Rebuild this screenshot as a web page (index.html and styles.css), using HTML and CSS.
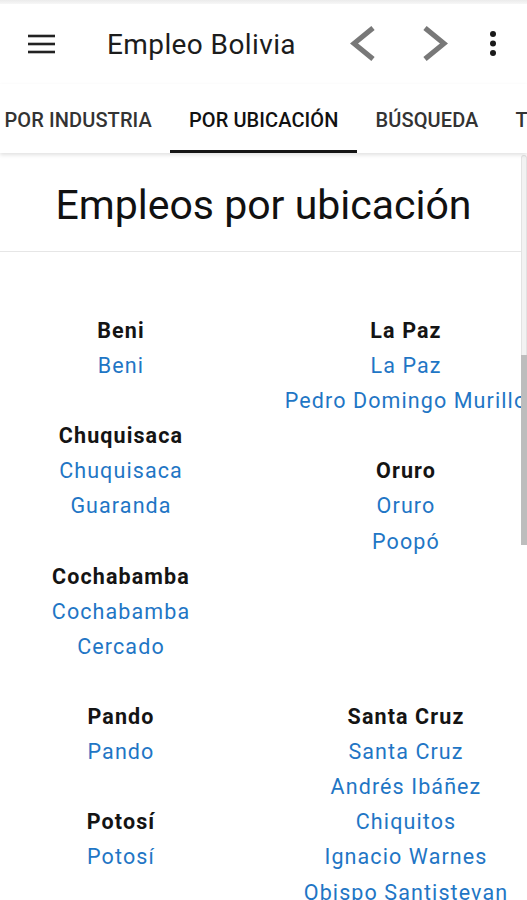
FILE: index.html
```html
<!DOCTYPE html>
<html lang="es">
<head>
<meta charset="utf-8">
<title>Empleo Bolivia</title>
<link rel="stylesheet" href="styles.css">
</head>
<body>
<div class="statusbar"></div>
<header class="toolbar">
  <button class="icon-btn menu-btn" aria-label="Menú">
    <svg width="27" height="22" viewBox="0 0 27 22"><rect x="0" y="1.7" width="27" height="2.6" fill="#222"/><rect x="0" y="9.7" width="27" height="2.6" fill="#222"/><rect x="0" y="17.7" width="27" height="2.6" fill="#222"/></svg>
  </button>
  <h1 class="title">Empleo Bolivia</h1>
  <div class="actions">
    <button class="icon-btn nav-btn" aria-label="Anterior">
      <svg width="26" height="36" viewBox="0 0 26 36"><polyline points="23,2 4,17.5 23,33" fill="none" stroke="#787878" stroke-width="5.2"/></svg>
    </button>
    <button class="icon-btn nav-btn" aria-label="Siguiente">
      <svg width="26" height="36" viewBox="0 0 26 36"><polyline points="3,2 22,17.5 3,33" fill="none" stroke="#787878" stroke-width="5.2"/></svg>
    </button>
    <button class="icon-btn more-btn" aria-label="Más">
      <svg width="8" height="28" viewBox="0 0 8 28"><circle cx="4" cy="4" r="3"/><circle cx="4" cy="13.5" r="3"/><circle cx="4" cy="23" r="3"/></svg>
    </button>
  </div>
</header>
<nav class="tabs">
  <div class="tab-strip">
    <div class="tab">Por industria</div>
    <div class="tab active">Por ubicación</div>
    <div class="tab">Búsqueda</div>
    <div class="tab">Todos</div>
  </div>
</nav>
<main class="content">
  <div class="page-head"><h2>Empleos por ubicación</h2></div>
  <section class="regions">
    <div class="region-grid">
      <div class="col">
        <div class="group"><div class="dept">Beni</div><a class="city">Beni</a></div>
        <div class="group"><div class="dept">Chuquisaca</div><a class="city">Chuquisaca</a><a class="city">Guaranda</a></div>
        <div class="group"><div class="dept">Cochabamba</div><a class="city">Cochabamba</a><a class="city">Cercado</a></div>
      </div>
      <div class="col">
        <div class="group"><div class="dept">La Paz</div><a class="city">La Paz</a><a class="city">Pedro Domingo Murillo</a></div>
        <div class="group"><div class="dept">Oruro</div><a class="city">Oruro</a><a class="city">Poopó</a></div>
      </div>
    </div>
    <div class="region-grid">
      <div class="col">
        <div class="group"><div class="dept">Pando</div><a class="city">Pando</a></div>
        <div class="group"><div class="dept">Potosí</div><a class="city">Potosí</a></div>
      </div>
      <div class="col">
        <div class="group"><div class="dept">Santa Cruz</div><a class="city">Santa Cruz</a><a class="city">Andrés Ibáñez</a><a class="city">Chiquitos</a><a class="city">Ignacio Warnes</a><a class="city">Obispo Santistevan</a></div>
      </div>
    </div>
  </section>
  <div class="scrollbar"><div class="track"></div><div class="thumb"></div></div>
</main>
</body>
</html>
```
FILE: styles.css
```css
* { box-sizing: border-box; }
html, body { margin: 0; padding: 0; }
body {
  width: 527px;
  height: 900px;
  overflow: hidden;
  background: #fff;
  font-family: Roboto, "Noto Sans", Arial, sans-serif;
  color: #1a1a1a;
}
.statusbar {
  height: 4px;
  background: linear-gradient(#ebebeb, #f7f7f7);
}
.toolbar {
  height: 80px;
  display: flex;
  align-items: center;
  padding-left: 28px;
  background: #fff;
}
.icon-btn {
  border: 0;
  background: none;
  padding: 0;
  margin: 0;
  display: flex;
  align-items: center;
  justify-content: center;
}
.menu-btn { width: 27px; height: 22px; }
.title {
  margin: 0 0 0 52px;
  flex: 1;
  font-size: 28px;
  font-weight: 400;
  color: #1c1c1c;
  letter-spacing: 0.4px;
}
.actions {
  display: flex;
  align-items: center;
  padding-right: 12px;
}
.nav-btn { width: 72px; height: 48px; }
.more-btn { width: 44px; height: 48px; fill: #1a1a1a; }
.tabs {
  position: relative;
  z-index: 2;
  height: 69px;
  background: #fff;
  box-shadow: 0 2px 4px rgba(0,0,0,0.12);
  overflow: hidden;
}
.tab-strip {
  display: flex;
  height: 100%;
  margin-left: -14px;
}
.tab {
  flex: none;
  height: 100%;
  padding: 3px 18.5px 0;
  display: flex;
  align-items: center;
  font-size: 20px;
  font-weight: 500;
  text-transform: uppercase;
  letter-spacing: 0.1px;
  color: #333;
  white-space: nowrap;
}
.tab.active {
  color: #111;
  box-shadow: inset 0 -3px 0 #151515;
}
.content {
  position: relative;
}
.page-head {
  height: 99px;
  border-bottom: 1px solid #e6e6e6;
  display: flex;
  align-items: center;
  justify-content: center;
  padding-top: 5px;
}
.page-head h2 {
  margin: 0;
  font-size: 41px;
  font-weight: 400;
  color: #111;
}
.regions {
  padding-top: 61px;
}
.region-grid {
  display: grid;
  grid-template-columns: 242px 242px;
  column-gap: 43px;
}
.col { display: flex; flex-direction: column; }
.group {
  display: flex;
  flex-direction: column;
  align-items: center;
  margin-bottom: 35.1px;
  font-size: 21.5px;
  line-height: 35.1px;
  letter-spacing: 1.1px;
  white-space: nowrap;
}
.dept {
  font-weight: 700;
  color: #141414;
}
.city {
  color: #1f76c5;
  text-decoration: none;
}
.scrollbar {
  position: absolute;
  top: 2px;
  right: 0;
  width: 6px;
  display: flex;
  flex-direction: column;
}
.track {
  height: 200px;
  background: #f2f2f2;
  border: 1px solid #e2e2e2;
  border-bottom: 0;
  border-radius: 4px 4px 0 0;
}
.thumb {
  height: 190px;
  background: #bdbdbd;
}
```
